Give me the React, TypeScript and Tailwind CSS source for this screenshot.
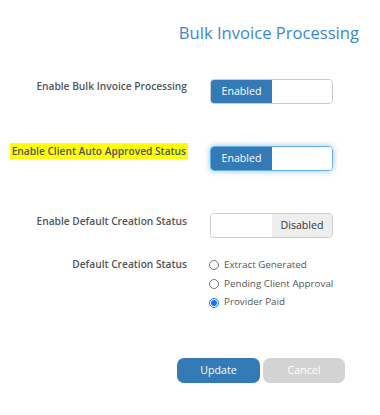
import React from "react";

function Switch({ on, focus }: { on: boolean; focus?: boolean }) {
  return (
    <div
      className={
        "flex w-[123px] h-[25px] rounded-[4px] overflow-hidden border " +
        (focus
          ? "border-[#66afe9] shadow-[0_0_6px_rgba(102,175,233,0.7)]"
          : "border-[#cccccc]")
      }
    >
      {on ? (
        <>
          <div className="w-[61px] h-full bg-[#337ab7] text-white text-[10.6px] flex items-center justify-center">
            Enabled
          </div>
          <div className="flex-1 bg-white" />
        </>
      ) : (
        <>
          <div className="w-[61px] h-full bg-white" />
          <div className="flex-1 bg-[#eeeeee] text-[#333] text-[10.6px] flex items-center justify-center">
            Disabled
          </div>
        </>
      )}
    </div>
  );
}

function Radio({ label, checked }: { label: string; checked?: boolean }) {
  return (
    <label className="flex items-center h-[18.7px] text-[9.8px] text-[#555]">
      <input
        type="radio"
        name="dcs"
        defaultChecked={checked}
        className="w-[10px] h-[10px] m-0 mr-[5px] accent-[#1a73e8]"
      />
      <span>{label}</span>
    </label>
  );
}

export default function App() {
  return (
    <div
      className="w-[380px] h-[415px] bg-white relative"
      style={{ fontFamily: '"Open Sans", "Liberation Sans", sans-serif' }}
    >
      <div className="pt-[21px] pr-[21px] text-right text-[16.6px] leading-[24px] text-[#3d87c9]">
        Bulk Invoice Processing
      </div>

      <div className="flex mt-[34px]">
        <div className="w-[188px] text-right pr-[1px] text-[10.2px] leading-[14px] font-semibold text-[#4f5560]">
          Enable Bulk Invoice Processing
        </div>
        <div className="ml-[22px]">
          <Switch on />
        </div>
      </div>

      <div className="flex mt-[42px]">
        <div className="w-[188px] flex justify-end items-start -mt-[3px]">
          <span className="bg-[#ffff00] pl-[2px] pr-[2px] text-[10.2px] leading-[16px] font-semibold text-[#4f5560] whitespace-nowrap">
            Enable Client Auto Approved Status
          </span>
        </div>
        <div className="ml-[22px]">
          <Switch on focus />
        </div>
      </div>

      <div className="flex mt-[42px]">
        <div className="w-[188px] text-right pr-[1px] mt-[1px] text-[10.2px] leading-[14px] font-semibold text-[#4f5560]">
          Enable Default Creation Status
        </div>
        <div className="ml-[22px]">
          <Switch on={false} />
        </div>
      </div>

      <div className="flex mt-[18px]">
        <div className="w-[188px] text-right pr-[1px] mt-[1px] text-[10.2px] leading-[14px] font-semibold text-[#4f5560]">
          Default Creation Status
        </div>
        <div className="ml-[21px] flex flex-col">
          <Radio label="Extract Generated" />
          <Radio label="Pending Client Approval" />
          <Radio label="Provider Paid" checked />
        </div>
      </div>

      <div className="flex mt-[46px] ml-[177px] gap-[3px]">
        <button className="w-[83px] h-[25px] rounded-[7px] bg-[#337ab7] text-white text-[10.6px]">
          Update
        </button>
        <button className="w-[82px] h-[25px] rounded-[7px] bg-[#d3d3d3] text-white text-[10.6px]">
          Cancel
        </button>
      </div>
    </div>
  );
}
